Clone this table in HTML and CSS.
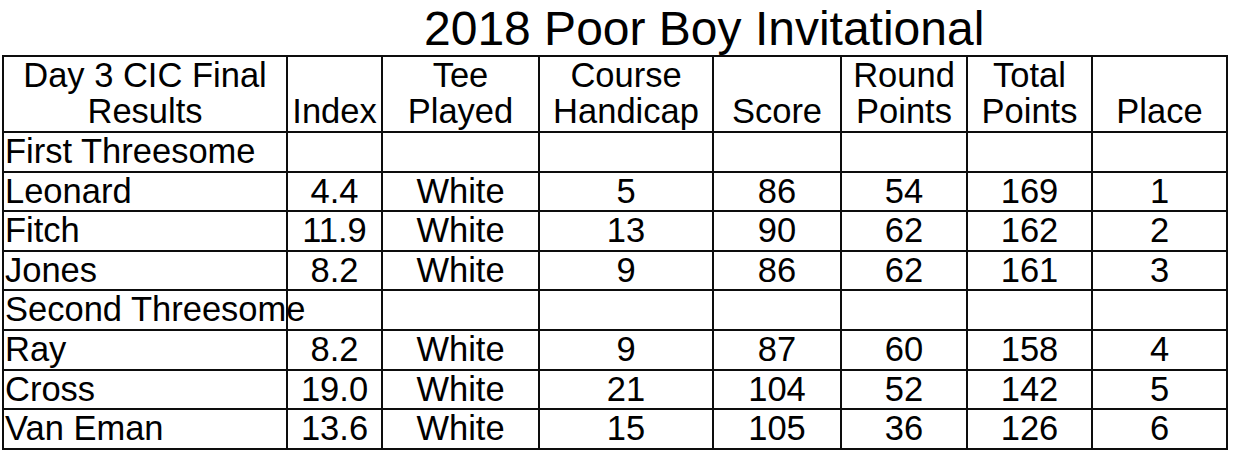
FILE: index.html
```html
<!DOCTYPE html>
<html>
<head>
<meta charset="utf-8">
<link rel="stylesheet" href="styles.css">
</head>
<body>
<div class="sheet">
  <h1 class="title">2018 Poor Boy Invitational</h1>
  <table class="results">
    <colgroup>
      <col class="c-name"><col class="c-index"><col class="c-tee"><col class="c-hcp">
      <col class="c-score"><col class="c-round"><col class="c-total"><col class="c-place">
    </colgroup>
    <thead>
      <tr>
        <th>Day 3 CIC Final<br>Results</th>
        <th>Index</th>
        <th>Tee<br>Played</th>
        <th>Course<br>Handicap</th>
        <th>Score</th>
        <th>Round<br>Points</th>
        <th>Total<br>Points</th>
        <th>Place</th>
      </tr>
    </thead>
    <tbody>
      <tr class="group"><td class="name">First Threesome</td><td></td><td></td><td></td><td></td><td></td><td></td><td></td></tr>
      <tr><td class="name">Leonard</td><td>4.4</td><td>White</td><td>5</td><td>86</td><td>54</td><td>169</td><td>1</td></tr>
      <tr><td class="name">Fitch</td><td>11.9</td><td>White</td><td>13</td><td>90</td><td>62</td><td>162</td><td>2</td></tr>
      <tr><td class="name">Jones</td><td>8.2</td><td>White</td><td>9</td><td>86</td><td>62</td><td>161</td><td>3</td></tr>
      <tr class="group"><td class="name">Second Threesome</td><td></td><td></td><td></td><td></td><td></td><td></td><td></td></tr>
      <tr><td class="name">Ray</td><td>8.2</td><td>White</td><td>9</td><td>87</td><td>60</td><td>158</td><td>4</td></tr>
      <tr><td class="name">Cross</td><td>19.0</td><td>White</td><td>21</td><td>104</td><td>52</td><td>142</td><td>5</td></tr>
      <tr><td class="name">Van Eman</td><td>13.6</td><td>White</td><td>15</td><td>105</td><td>36</td><td>126</td><td>6</td></tr>
    </tbody>
  </table>
</div>
</body>
</html>
```

FILE: styles.css
```css
html, body {
  margin: 0;
  padding: 0;
  background: #ffffff;
}

body {
  font-family: "Liberation Sans", Arial, sans-serif;
  color: #000000;
}

.sheet {
  width: 1240px;
  height: 455px;
  overflow: hidden;
}

.title {
  margin: 0;
  padding: 3px 0 0 424px;
  font-size: 48px;
  font-weight: normal;
  line-height: 52px;
  white-space: nowrap;
}

.results {
  margin-left: 2px;
  width: 1224px;
  table-layout: fixed;
  border-collapse: collapse;
  font-size: 34.5px;
}

.c-name { width: 284px; }
.c-index { width: 95px; }
.c-tee { width: 157px; }
.c-hcp { width: 174px; }
.c-score { width: 128px; }
.c-round { width: 126px; }
.c-total { width: 125px; }
.c-place { width: 135px; }

.results th,
.results td {
  border: 2px solid #0d0d0d;
  padding: 0;
  text-align: center;
  white-space: nowrap;
  overflow: visible;
}

.results th {
  font-weight: normal;
  line-height: 36px;
  vertical-align: bottom;
  padding-bottom: 2px;
}

.results td {
  line-height: 37.6px;
  vertical-align: middle;
}

.results td.name {
  text-align: left;
  padding-left: 1px;
}
```
